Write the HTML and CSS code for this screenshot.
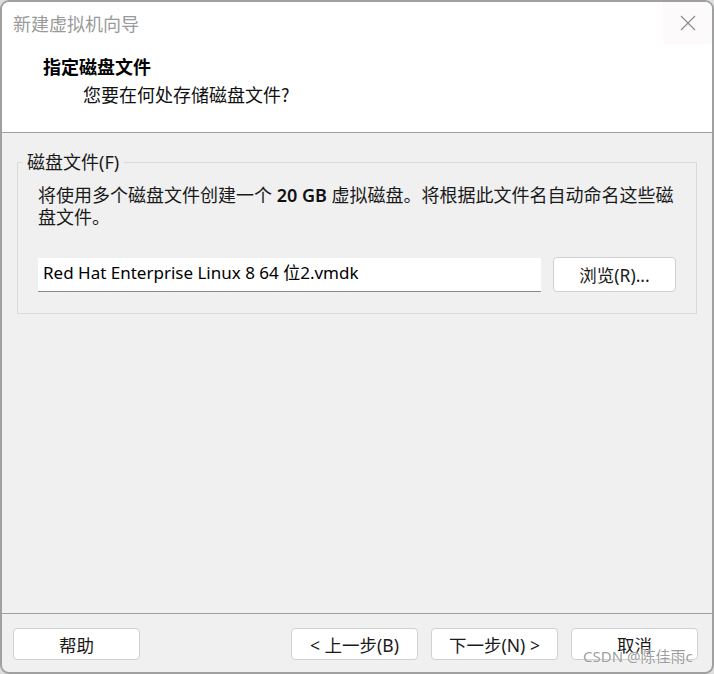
FILE: index.html
```html
<!DOCTYPE html>
<html lang="zh-CN">

<head>
  <meta charset="UTF-8" />
  <meta name="viewport" content="width=device-width, initial-scale=1.0" />
  <title>新建虚拟机向导</title>
  <link rel="stylesheet" href="styles.css">
</head>

<body>
  <div class="window">
    <div class="titlebar">
      <span class="title">新建虚拟机向导</span>
      <button class="close-btn" aria-label="关闭">
        <svg width="16" height="16" viewBox="0 0 16 16">
          <path d="M1 1 L15 15 M15 1 L1 15" stroke="#8c8c8c" stroke-width="1.2" fill="none" />
        </svg>
      </button>
    </div>

    <div class="header">
      <h1>指定磁盘文件</h1>
      <p>您要在何处存储磁盘文件?</p>
    </div>

    <div class="content">
      <fieldset class="group">
        <legend>磁盘文件(F)</legend>
        <p class="desc">
          将使用多个磁盘文件创建一个 <span class="num">20 GB</span> 虚拟磁盘。将根据此文件名自动命名这些磁<br>盘文件。
        </p>
        <div class="file-row">
          <input class="file-input" type="text" value="Red Hat Enterprise Linux 8 64 位2.vmdk">
          <button class="btn browse-btn">浏览(R)...</button>
        </div>
      </fieldset>
    </div>

    <div class="footer">
      <button class="btn">帮助</button>
      <div class="nav-buttons">
        <button class="btn">&lt; 上一步(B)</button>
        <button class="btn">下一步(N) &gt;</button>
        <button class="btn">取消</button>
      </div>
    </div>
  </div>

  <!-- watermark -->
  <div class="watermark">CSDN @陈佳雨c</div>
</body>

</html>
```

FILE: styles.css
```css
* {
  box-sizing: border-box;
}

body {
  margin: 0;
  width: 714px;
  height: 674px;
  background: #dedede;
  font-family: "Noto Sans", "Noto Sans CJK SC", sans-serif;
  font-size: 18px;
  color: #1a1a1a;
  position: relative;
  overflow: hidden;
}

.window {
  width: 714px;
  height: 674px;
  border: 2px solid #a0a0a0;
  border-radius: 9px;
  background: #f0f0f0;
  display: flex;
  flex-direction: column;
  overflow: hidden;
}

.titlebar {
  height: 42px;
  background: #fff;
  display: flex;
  align-items: center;
  justify-content: space-between;
}

.title {
  margin-left: 11px;
  font-family: "Noto Sans CJK SC", sans-serif;
  font-size: 18px;
  color: #9a9a9a;
}

.close-btn {
  width: 49px;
  height: 42px;
  border: none;
  background: #fcfafb;
  display: flex;
  align-items: center;
  justify-content: center;
  padding: 0;
}

.header {
  background: #fff;
  height: 89px;
  padding-left: 41px;
  border-bottom: 1px solid #a0a0a0;
}

.header h1 {
  margin: 10px 0 0;
  font-family: "Noto Sans CJK SC", sans-serif;
  font-size: 18px;
  font-weight: bold;
  line-height: 24px;
  color: #000;
}

.header p {
  margin: 4px 0 0 40px;
  font-family: "Noto Sans CJK SC", sans-serif;
  font-size: 18px;
  line-height: 24px;
  color: #111;
}

.content {
  flex: 1;
  padding: 18px 15px 0;
}

.group {
  margin: 0;
  border: 1px solid #dadada;
  padding: 0 20px 21px;
}

.group legend {
  margin-left: -16px;
  padding: 0 5px;
  line-height: 22px;
  font-size: 18px;
  color: #1a1a1a;
}

.desc {
  margin: 11px 0 0;
  line-height: 22px;
  font-size: 18px;
}

.desc .num {
  font-weight: 600;
  color: #111;
}

.file-row {
  display: flex;
  align-items: center;
  gap: 12px;
  margin-top: 29px;
}

.file-input {
  width: 503px;
  height: 34px;
  border: none;
  border-bottom: 1px solid #8a8a8a;
  background: #fff;
  padding: 0 5px 6px;
  font-family: "Noto Sans", "Noto Sans CJK SC", sans-serif;
  font-size: 17px;
  color: #000;
  outline: none;
}

.btn {
  width: 127px;
  height: 32px;
  background: #fff;
  border: 1px solid #d0d0d0;
  border-radius: 4px;
  font-family: "Noto Sans", "Noto Sans CJK SC", sans-serif;
  font-size: 17.5px;
  color: #1a1a1a;
  padding: 0;
}

.browse-btn {
  width: 123px;
  height: 35px;
}

.footer {
  border-top: 1px solid #a0a0a0;
  padding: 14px 14px 12px 11px;
  display: flex;
  justify-content: space-between;
}

.nav-buttons {
  display: flex;
  gap: 13px;
}

.watermark {
  position: absolute;
  left: 583px;
  top: 645px;
  font-family: "Noto Sans", "Noto Sans CJK SC", sans-serif;
  font-size: 15px;
  color: rgba(140, 140, 140, 0.85);
  text-shadow: 0 0 1px #fff;
}
```
